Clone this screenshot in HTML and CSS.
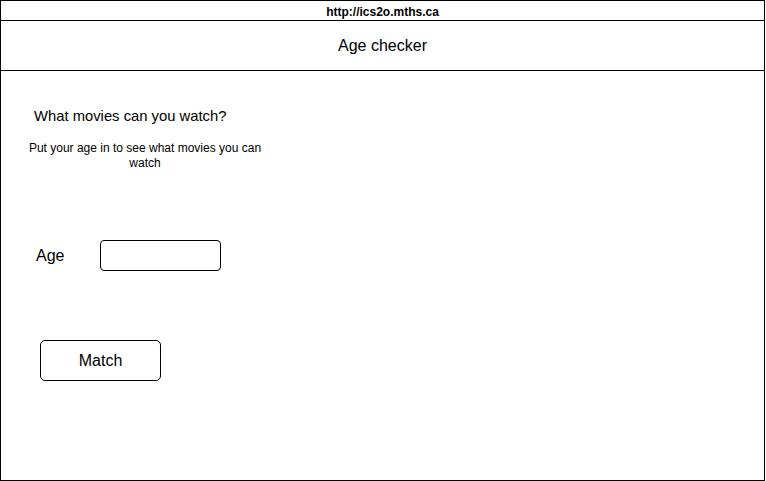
FILE: index.html
```html
<!DOCTYPE html>
<html lang="en">
<head>
<meta charset="utf-8">
<title>Age checker</title>
<link rel="stylesheet" href="styles.css">
</head>
<body>
<div class="frame">
  <div class="urlbar">http://ics2o.mths.ca</div>
  <header class="header">Age checker</header>
  <main class="main">
    <h1 class="title">What movies can you watch?</h1>
    <p class="subtitle">Put your age in to see what movies you can watch</p>
    <div class="age-row">
      <label class="age-label" for="age">Age</label>
      <input class="age-input" id="age" type="text">
    </div>
    <button class="match-btn" type="button">Match</button>
  </main>
</div>
</body>
</html>
```

FILE: styles.css
```css
html, body {
  margin: 0;
  padding: 0;
  background: #fff;
}
body {
  font-family: "Liberation Sans", Arial, sans-serif;
  color: #000;
}
.frame {
  box-sizing: border-box;
  width: 765px;
  height: 481px;
  border: 1px solid #000;
  display: flex;
  flex-direction: column;
}
.urlbar {
  height: 19px;
  border-bottom: 1px solid #000;
  font-size: 12px;
  font-weight: bold;
  line-height: 22px;
  text-align: center;
}
.header {
  height: 49px;
  border-bottom: 1px solid #000;
  font-size: 16px;
  line-height: 49px;
  text-align: center;
}
.main {
  display: flex;
  flex-direction: column;
  align-items: flex-start;
}
.title {
  margin: 36px 0 0 33px;
  font-size: 14.8px;
  font-weight: normal;
  line-height: 18px;
}
.subtitle {
  margin: 16px 0 0 19px;
  width: 250px;
  font-size: 12px;
  line-height: 15px;
  text-align: center;
}
.age-row {
  margin: 69px 0 0 35px;
  display: flex;
  align-items: center;
}
.age-label {
  font-size: 16px;
  width: 64px;
}
.age-input {
  box-sizing: border-box;
  width: 121px;
  height: 31px;
  margin: 0;
  border: 1px solid #000;
  border-radius: 4px;
  background: #fff;
  outline: none;
}
.match-btn {
  box-sizing: border-box;
  margin: 69px 0 0 39px;
  width: 121px;
  height: 41px;
  border: 1px solid #000;
  border-radius: 5px;
  background: #fff;
  font-family: "Liberation Sans", Arial, sans-serif;
  font-size: 16px;
  color: #000;
  padding: 0;
}
```
